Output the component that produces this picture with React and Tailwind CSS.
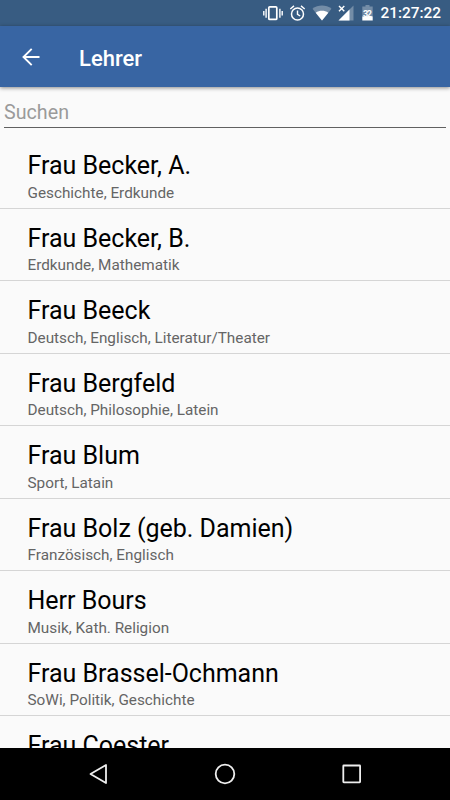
import React from "react";

const teachers = [
  { name: "Frau Becker, A.", subjects: "Geschichte, Erdkunde" },
  { name: "Frau Becker, B.", subjects: "Erdkunde, Mathematik" },
  { name: "Frau Beeck", subjects: "Deutsch, Englisch, Literatur/Theater" },
  { name: "Frau Bergfeld", subjects: "Deutsch, Philosophie, Latein" },
  { name: "Frau Blum", subjects: "Sport, Latain" },
  { name: "Frau Bolz (geb. Damien)", subjects: "Französisch, Englisch" },
  { name: "Herr Bours", subjects: "Musik, Kath. Religion" },
  { name: "Frau Brassel-Ochmann", subjects: "SoWi, Politik, Geschichte" },
  { name: "Frau Coester", subjects: "" },
];

const StatusBar = () => (
  <div className="flex h-[26px] shrink-0 items-center bg-[#385c82] pr-[9px] text-white">
    <svg className="ml-auto" width="116" height="26" viewBox="0 0 116 26" fill="none">
      {/* vibrate */}
      <rect x="5.8" y="6.8" width="8" height="12.6" rx="1" stroke="currentColor" strokeWidth="1.7" />
      <path d="M3.1 8.7v9M16.9 8.7v9M.8 11v4.5M19.2 11v4.5" stroke="currentColor" strokeWidth="1.4" />
      {/* alarm */}
      <circle cx="34.5" cy="14" r="6" stroke="currentColor" strokeWidth="1.5" />
      <path d="M34.5 10.5v3.8l2.7 1.7M27.3 9l3.7-3.1M41.7 9L38 5.9" stroke="currentColor" strokeWidth="1.4" />
      {/* wifi */}
      <path d="M49.5 8.7C55 4.400 63 4.400 68.500 8.700L59 20.500z" fill="#fff" fillOpacity=".3" />
      <path d="M52.700 12.700c3.800-2.500 8.800-2.500 12.600 0L59 20.500z" fill="currentColor" />
      {/* mobile signal */}
      <path d="M90.500 5.500V20.500h-15z" fill="#fff" fillOpacity=".3" />
      <path d="M86.500 9.500V20.500h-11z" fill="currentColor" />
      <path d="M76 6l5.300 5.300M81.300 6L76 11.300" stroke="currentColor" strokeWidth="1.4" />
      {/* battery */}
      <path d="M102.500 5h4v1.500h3.200V17H99.300V6.500h3.200z" fill="#fff" fillOpacity=".3" />
      <path d="M99.300 16.500h10.400v4H99.300z" fill="currentColor" />
      <text x="104.500" y="16.500" textAnchor="middle" fill="currentColor" fontSize="9" fontWeight="700" textLength="9">32</text>
    </svg>
    <span className="w-[62px] pt-px text-right text-[15.400px] leading-[25px] font-medium">21:27:22</span>
  </div>
);

const Toolbar = () => (
  <header className="z-10 flex h-[61px] shrink-0 items-center bg-[#3865a3] pl-[22px] text-white shadow-[0_1px_4px_rgba(0,0,0,0.45)]">
    <button type="button" aria-label="Zurück">
      <svg width="18" height="18" viewBox="0 0 18 18" fill="none" stroke="currentColor" strokeWidth="1.9">
        <path d="M17.500 9H1.500M9.700 .9L1.500 9l8.200 8.100" />
      </svg>
    </button>
    <h1 className="mt-[3px] ml-[39px] text-[22px] font-medium">Lehrer</h1>
  </header>
);

const TeacherRow = ({ name, subjects }) => (
  <li className="h-[72.5px] shrink-0 border-b border-[#d5d5d5] pt-[15px] pl-[27.500px]">
    <div className="text-[25px] leading-[30px] tracking-[-0.01px] text-black">{name}</div>
    <div className="mt-[2.500px] text-[15.300px] leading-[18px] text-[#656565]">{subjects}</div>
  </li>
);

const NavBar = () => (
  <nav className="h-[52px] shrink-0 bg-black">
    <svg width="450" height="52" viewBox="0 0 450 52" fill="none" stroke="#eee" strokeWidth="1.800" strokeLinejoin="round">
      <path d="M106 17v18l-15.500-9z" />
      <circle cx="225" cy="26" r="9.300" />
      <rect x="343.300" y="17.500" width="16.800" height="16.800" rx=".5" />
    </svg>
  </nav>
);

const App = () => (
  <div className="flex h-[800px] w-[450px] flex-col overflow-hidden bg-[#fafafa] font-['Roboto',sans-serif]">
    <StatusBar />
    <Toolbar />
    <main className="flex min-h-0 flex-1 flex-col overflow-hidden">
      <input
        type="text"
        placeholder="Suchen"
        className="mx-1 mt-[10px] h-[31px] shrink-0 border-b border-[#606060] text-[19.700px] outline-none placeholder:text-[#9a9a9a]"
      />
      <ul className="mt-[8.300px] flex flex-col">
        {teachers.map((teacher) => (
          <TeacherRow key={teacher.name} {...teacher} />
        ))}
      </ul>
    </main>
    <NavBar />
  </div>
);

export default App;
